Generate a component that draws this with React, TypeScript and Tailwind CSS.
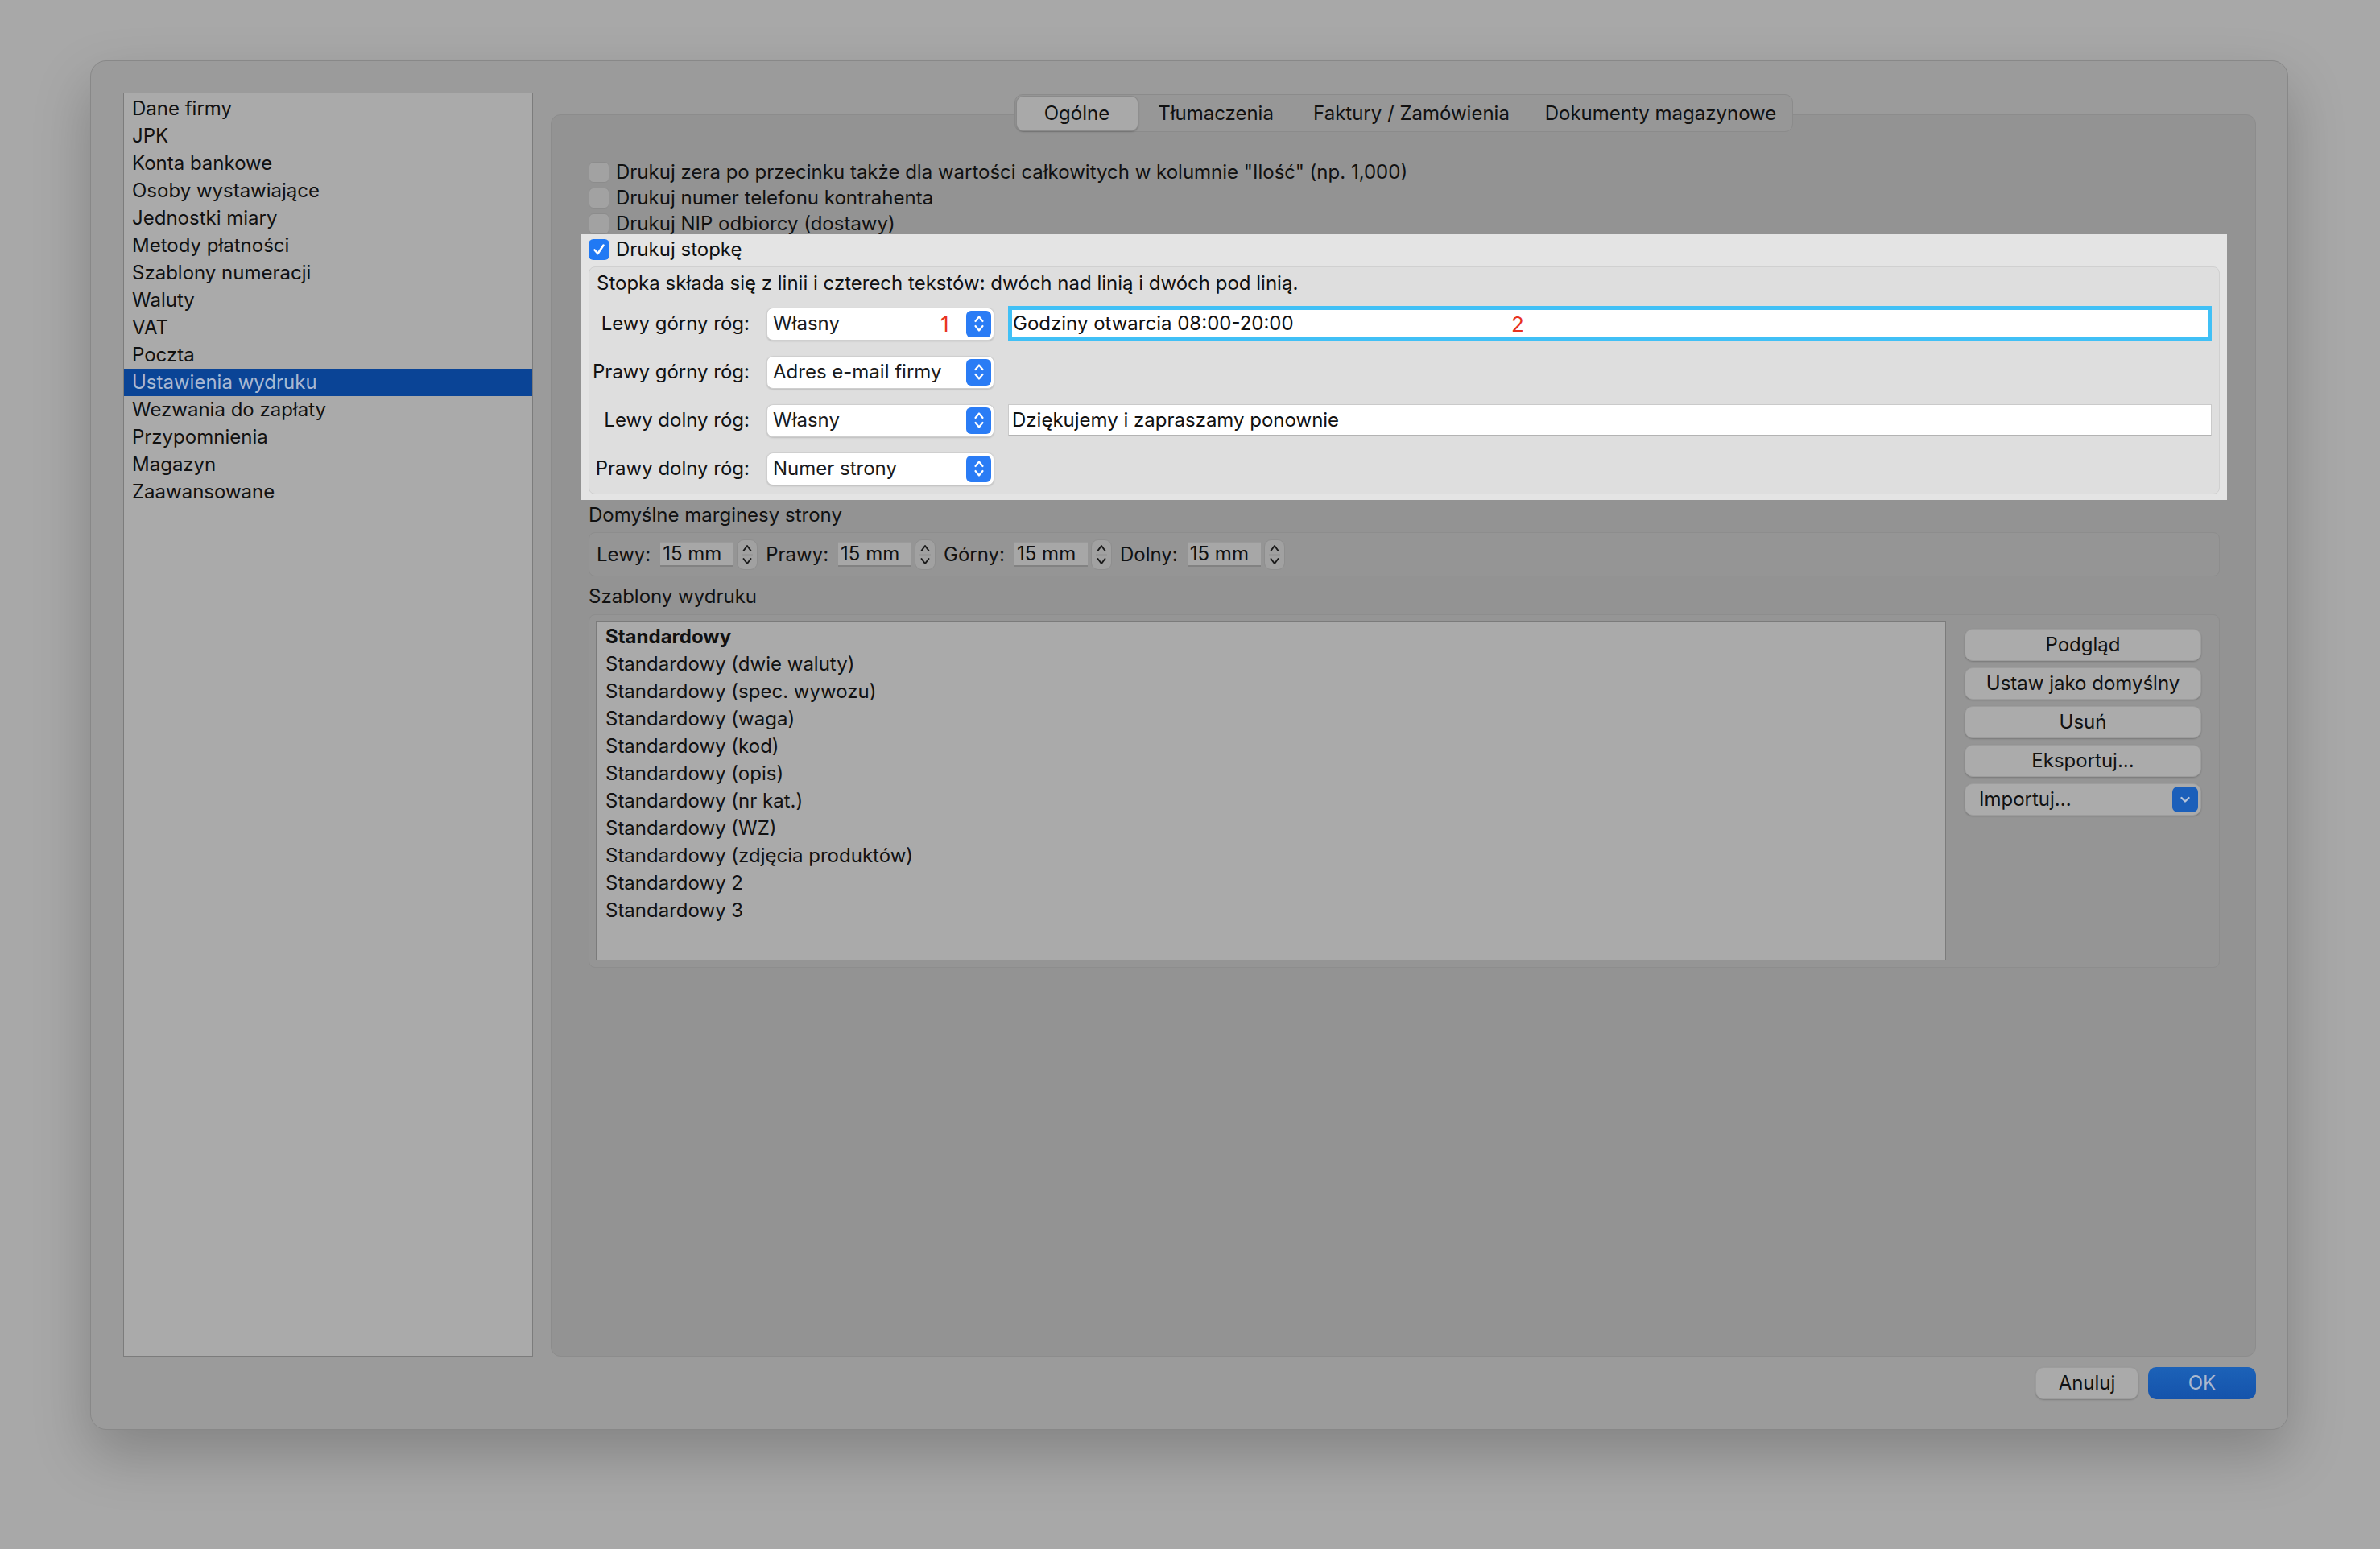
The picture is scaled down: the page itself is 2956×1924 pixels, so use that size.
import React from 'react';

const sections = [
  'Dane firmy',
  'JPK',
  'Konta bankowe',
  'Osoby wystawiające',
  'Jednostki miary',
  'Metody płatności',
  'Szablony numeracji',
  'Waluty',
  'VAT',
  'Poczta',
  'Ustawienia wydruku',
  'Wezwania do zapłaty',
  'Przypomnienia',
  'Magazyn',
  'Zaawansowane',
];

const templates = [
  'Standardowy',
  'Standardowy (dwie waluty)',
  'Standardowy (spec. wywozu)',
  'Standardowy (waga)',
  'Standardowy (kod)',
  'Standardowy (opis)',
  'Standardowy (nr kat.)',
  'Standardowy (WZ)',
  'Standardowy (zdjęcia produktów)',
  'Standardowy 2',
  'Standardowy 3',
];

const tabs = [
  { label: 'Ogólne', w: 'w-[152px]' },
  { label: 'Tłumaczenia', w: 'w-[193px]' },
  { label: 'Faktury / Zamówienia', w: 'w-[293px]' },
  { label: 'Dokumenty magazynowe', w: 'w-[326px]' },
];

function Checkbox({ checked }: { checked?: boolean }) {
  if (checked) {
    return (
      <div className="w-[26px] h-[26px] rounded-[6px] bg-[#2079f4] flex items-center justify-center shrink-0">
        <svg width="18" height="18" viewBox="0 0 18 18">
          <path d="M3.5 9.5 L7.5 14 L14.5 3.5" fill="none" stroke="white" strokeWidth="2.6" strokeLinecap="round" strokeLinejoin="round" />
        </svg>
      </div>
    );
  }
  return <div className="w-[26px] h-[26px] rounded-[6px] bg-[#a2a2a2] border border-[#8c8c8c] shrink-0" />;
}

function UpDown({ color, w = 2.2 }: { color: string; w?: number }) {
  return (
    <svg width="16" height="28" viewBox="0 0 16 28">
      <path d="M3.5 11 L8 5.5 L12.5 11" fill="none" stroke={color} strokeWidth={w} strokeLinecap="round" strokeLinejoin="round" />
      <path d="M3.5 17 L8 22.5 L12.5 17" fill="none" stroke={color} strokeWidth={w} strokeLinecap="round" strokeLinejoin="round" />
    </svg>
  );
}

function Popup({ value, mark }: { value: string; mark?: string }) {
  return (
    <div className="relative w-[283px] h-[41px] rounded-[8px] bg-white border border-[#cfcfcf] shadow-[0_1px_2px_rgba(0,0,0,0.15)] flex items-center pl-[7px] shrink-0">
      <span className="text-[#1a1a1a]">{value}</span>
      {mark && <span className="absolute left-[215px] text-[#e8321e] text-[26px]">{mark}</span>}
      <div className="absolute right-[3px] top-[3px] w-[31px] h-[33px] rounded-[6px] bg-[#2a7cf5] flex items-center justify-center">
        <UpDown color="white" />
      </div>
    </div>
  );
}

function MarginField({ label }: { label: string }) {
  return (
    <div className="flex items-center">
      <span className="mr-[12px]">{label}</span>
      <div className="w-[91px] h-[31px] bg-[#a7a7a7] border-b-2 border-[#828282] border-t border-t-[#9a9a9a] pl-[3px] flex items-center">15 mm</div>
      <div className="ml-[4px] mr-[10px] w-[26px] h-[38px] rounded-[9px] bg-[#a1a1a1] border border-[#8e8e8e] flex flex-col items-center justify-center">
        <svg width="16" height="34" viewBox="0 0 16 34">
          <path d="M3.5 12 L8 6 L12.5 12" fill="none" stroke="#1a1a1a" strokeWidth="2" strokeLinecap="round" strokeLinejoin="round" />
          <line x1="1" y1="17" x2="15" y2="17" stroke="#8f8f8f" strokeWidth="1" />
          <path d="M3.5 22 L8 28 L12.5 22" fill="none" stroke="#1a1a1a" strokeWidth="2" strokeLinecap="round" strokeLinejoin="round" />
        </svg>
      </div>
    </div>
  );
}

function Button({ children }: { children: React.ReactNode }) {
  return (
    <div className="h-[40px] rounded-[10px] bg-[#ababab] border border-[#9d9d9d] shadow-[0_1px_2px_rgba(0,0,0,0.2)] flex items-center justify-center text-[#111]">
      {children}
    </div>
  );
}

function Label({ children }: { children: React.ReactNode }) {
  return (
    <div className="w-[190px] mr-[21px] shrink-0 flex justify-end">
      <span className="whitespace-nowrap">{children}</span>
    </div>
  );
}

export default function App() {
  return (
    <div className="w-[2956px] h-[1924px] bg-[#a8a8a8] font-[Inter,sans-serif] text-[24px] text-[#111] pt-[75px] pl-[112px]">
      <div className="w-[2730px] h-[1701px] rounded-[20px] bg-[#9b9b9b] border border-[#888] shadow-[0_30px_70px_rgba(0,0,0,0.22)] flex flex-col pl-[40px] pr-[39px] pt-[39px]">
        <div className="flex gap-[22px] h-[1570px]">
          {/* sidebar */}
          <div className="w-[509px] h-full bg-[#aaaaaa] border border-[#7c7c7c] pt-[2px]">
            {sections.map((s) => (
              <div
                key={s}
                className={
                  s === 'Ustawienia wydruku'
                    ? 'h-[34px] flex items-center pl-[10px] bg-[#0a4496] text-[#a9b8d2]'
                    : 'h-[34px] flex items-center pl-[10px]'
                }
              >
                {s}
              </div>
            ))}
          </div>

          {/* main */}
          <div className="flex-1 flex flex-col">
            <div className="relative z-10 self-center mt-[2px] -mb-[22px] h-[47px] rounded-[10px] bg-[#979797] border border-[#8b8b8b] flex items-center">
              {tabs.map((t, i) => (
                <div
                  key={t.label}
                  className={
                    i === 0
                      ? `${t.w} h-[44px] ml-[1px] rounded-[9px] bg-[#a9a9a9] border border-[#8a8a8a] shadow-[0_1px_2px_rgba(0,0,0,0.2)] flex items-center justify-center`
                      : `${t.w} h-[44px] flex items-center justify-center`
                  }
                >
                  {t.label}
                </div>
              ))}
            </div>

            <div className="flex-1 rounded-[12px] bg-[#939393] border border-[#8c8c8c] pt-[55px] pl-[46px] pr-[44px] flex flex-col">
              <div className="h-[32px] flex items-center gap-[8px]">
                <Checkbox />
                <span>Drukuj zera po przecinku także dla wartości całkowitych w kolumnie "Ilość" (np. 1,000)</span>
              </div>
              <div className="h-[32px] flex items-center gap-[8px]">
                <Checkbox />
                <span>Drukuj numer telefonu kontrahenta</span>
              </div>
              <div className="h-[32px] flex items-center gap-[8px]">
                <Checkbox />
                <span>Drukuj NIP odbiorcy (dostawy)</span>
              </div>

              {/* highlighted footer section */}
              <div className="relative z-10 -mt-[3px] -ml-[9px] -mr-[9px] pl-[9px] pr-[9px] pt-[3px] pb-[7px] bg-[#e4e4e4]">
                <div className="h-[32px] flex items-center gap-[8px]">
                  <Checkbox checked />
                  <span>Drukuj stopkę</span>
                </div>
                <div className="mt-[5px] rounded-[8px] bg-[#dedede] border border-[#d0d0d0] px-[9px] pb-[1px]">
                  <div className="h-[40px] flex items-center">
                    Stopka składa się z linii i czterech tekstów: dwóch nad linią i dwóch pod linią.
                  </div>
                  <div className="h-[60px] flex items-center">
                    <Label>Lewy górny róg:</Label>
                    <Popup value="Własny" mark="1" />
                    <div className="relative ml-[17px] flex-1 h-[44px] bg-white border-[5px] border-[#40c0f6] flex items-center pl-[1px]">
                      <span>Godziny otwarcia 08:00-20:00</span>
                      <span className="absolute left-[620px] text-[#e8321e] text-[26px]">2</span>
                    </div>
                  </div>
                  <div className="h-[60px] flex items-center">
                    <Label>Prawy górny róg:</Label>
                    <Popup value="Adres e-mail firmy" />
                  </div>
                  <div className="h-[60px] flex items-center">
                    <Label>Lewy dolny róg:</Label>
                    <Popup value="Własny" />
                    <div className="ml-[17px] flex-1 h-[40px] bg-white border border-[#cacaca] border-b-2 border-b-[#b3b3b3] flex items-center pl-[4px]">
                      Dziękujemy i zapraszamy ponownie
                    </div>
                  </div>
                  <div className="h-[60px] flex items-center">
                    <Label>Prawy dolny róg:</Label>
                    <Popup value="Numer strony" />
                  </div>
                </div>
              </div>

              <div className="h-[34px] mt-[2px] flex items-center">Domyślne marginesy strony</div>
              <div className="mt-[4px] h-[55px] rounded-[8px] bg-[#959595] border border-[#8d8d8d] flex items-center px-[9px]">
                <MarginField label="Lewy:" />
                <MarginField label="Prawy:" />
                <MarginField label="Górny:" />
                <MarginField label="Dolny:" />
              </div>

              <div className="h-[34px] mt-[8px] flex items-center">Szablony wydruku</div>
              <div className="mt-[5px] h-[439px] rounded-[8px] bg-[#959595] border border-[#8d8d8d] flex pl-[8px] pt-[7px] pb-[8px] pr-[22px]">
                <div className="w-[1677px] h-full bg-[#aaaaaa] border border-[#7b7b7b] pt-[2px] pl-[11px]">
                  {templates.map((t, i) => (
                    <div key={t} className={i === 0 ? 'h-[34px] flex items-center font-bold' : 'h-[34px] flex items-center'}>
                      {t}
                    </div>
                  ))}
                </div>
                <div className="ml-[23px] flex-1 flex flex-col gap-[8px] pt-[10px]">
                  <Button>Podgląd</Button>
                  <Button>Ustaw jako domyślny</Button>
                  <Button>Usuń</Button>
                  <Button>Eksportuj...</Button>
                  <div className="relative h-[40px] rounded-[10px] bg-[#ababab] border border-[#9d9d9d] shadow-[0_1px_2px_rgba(0,0,0,0.2)] flex items-center pl-[17px]">
                    Importuj...
                    <div className="absolute right-[3px] top-[3px] w-[32px] h-[32px] rounded-[7px] bg-[#1b5fba] flex items-center justify-center">
                      <svg width="18" height="18" viewBox="0 0 18 18">
                        <path d="M4.5 7 L9 11.5 L13.5 7" fill="none" stroke="#b9c6da" strokeWidth="2.4" strokeLinecap="round" strokeLinejoin="round" />
                      </svg>
                    </div>
                  </div>
                </div>
              </div>
            </div>
          </div>
        </div>

        <div className="mt-[13px] flex justify-end gap-[12px]">
          <div className="w-[128px] h-[40px] rounded-[10px] bg-[#aaaaaa] border border-[#9c9c9c] shadow-[0_1px_2px_rgba(0,0,0,0.2)] flex items-center justify-center">
            Anuluj
          </div>
          <div className="w-[134px] h-[40px] rounded-[10px] bg-gradient-to-b from-[#1c62b8] to-[#1553ab] flex items-center justify-center text-[#a9b8cf]">
            OK
          </div>
        </div>
      </div>
    </div>
  );
}
